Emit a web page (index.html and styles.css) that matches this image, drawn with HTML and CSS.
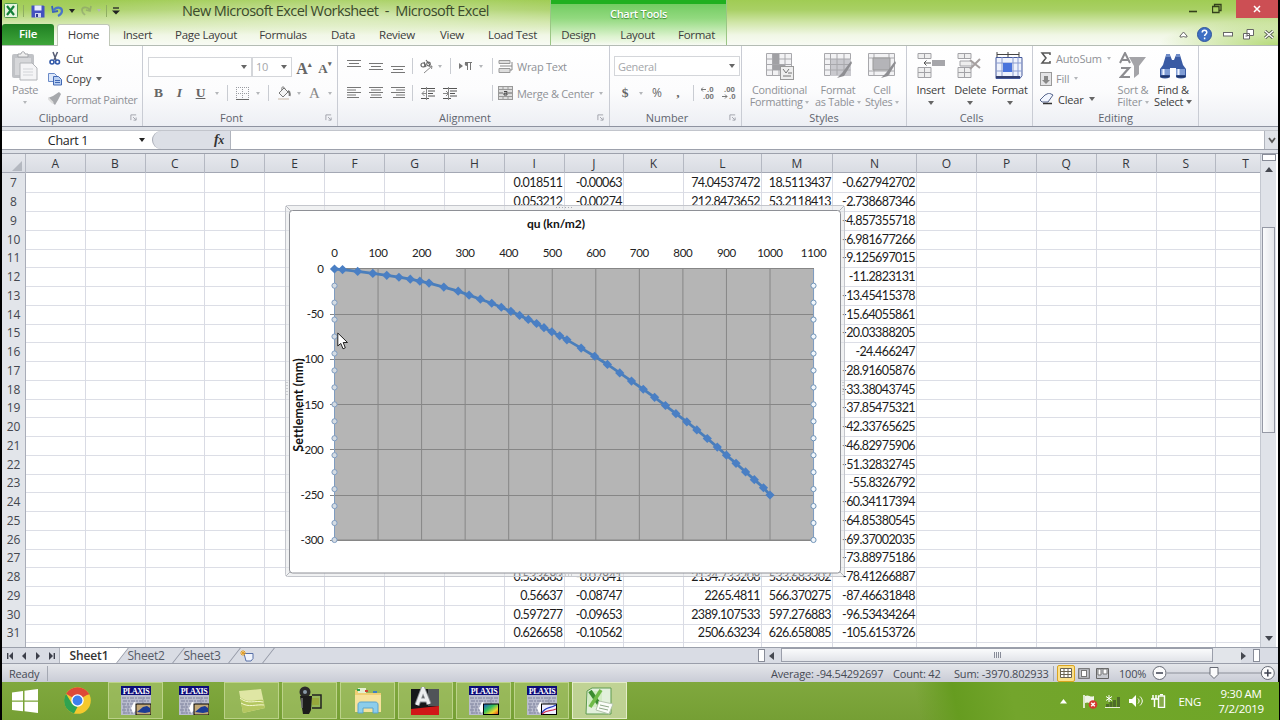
FILE: index.html
```
<!DOCTYPE html>
<html lang="en">
<head>
  <meta charset="UTF-8" />
  <meta name="viewport" content="width=device-width, initial-scale=1.0" />
  <title>New Microsoft Excel Worksheet - Microsoft Excel</title>
  <link rel="stylesheet" href="styles.css">
</head>
<body>
<svg width="0" height="0" class="defs">
  <symbol id="launcher" viewBox="0 0 8 8"><path d="M1 7V1h6M3.500 3.500l3 3M7 4v3H4" fill="none" stroke="#9a9da6"/></symbol>
  <symbol id="plaxis" viewBox="0 0 30 29">
    <rect width="30" height="29" fill="#b9bccd"/><rect width="30" height="9" fill="#0c0c78"/>
    <path d="M1 12h28M2 15h26M1 18h12M2 21h9M1 24h12M2 27h10" stroke="#7e829e" stroke-width="1.200" stroke-dasharray="4 1 2 1"/>
    <path d="M7 17v11M3 18v10M22 11v7" stroke="#8d91aa"/>
    <path d="M10 22l3-6 3 1 1 6-5 4z" fill="#fff"/>
  </symbol>
</svg>
<div class="window">
  <header class="top">
    <div class="titlebar">
      <div class="quick">
        <svg width="14" height="15" viewBox="0 0 14 15"><rect x=".5" y=".5" width="13" height="14" rx="1" fill="#e6f4e0" stroke="#4c9a4c"/><path d="M3 3l7 9M10 3l-7 9" stroke="#15803a" stroke-width="2.200"/></svg>
        <i class="vsep"></i>
        <svg width="14" height="14" viewBox="0 0 14 14"><path d="M.5 1.500h12l1 1v11H.5z" fill="#4350c0"/><path d="M3.500 1.500h7v5h-7z" fill="#e8ecff"/><path d="M4 9h6v4.500H4z" fill="#cdd3f0"/><path d="M5 10h2v3H5z" fill="#303a90"/></svg>
        <svg width="13" height="12" viewBox="0 0 13 12"><path d="M1 1l1 6 5-1" fill="none" stroke="#3a62b8" stroke-width="1.800"/><path d="M2 6c3-5 9-4 9 0 0 3-2 4-4 5" fill="none" stroke="#4a74c8" stroke-width="2.200"/></svg>
        <i class="caret dark"></i>
        <svg width="12" height="11" viewBox="0 0 12 11" opacity=".45"><path d="M11 1l-1 5-4-1M10 5c-3-4-8-3-8 0 0 3 2 4 3 5" fill="none" stroke="#7c8a6c" stroke-width="1.700"/></svg>
        <i class="caret faint"></i>
        <i class="vsep"></i>
        <svg width="8" height="8" viewBox="0 0 8 8"><path d="M1 1h6" stroke="#222" stroke-width="1.300"/><path d="M0 3.500h8l-4 4z" fill="#222"/></svg>
      </div>
      <h1 class="title">New Microsoft Excel Worksheet &nbsp;-&nbsp; Microsoft Excel</h1>
      <div class="winbtns">
        <svg width="10" height="18" viewBox="0 0 10 18"><path d="M1 11.500h8" stroke="#34401c" stroke-width="1.600"/></svg>
        <svg width="10" height="18" viewBox="0 0 10 18"><path d="M.5 6.500h6.500v6H.5zM2.500 6V4.500h6.500v6H7.500" fill="none" stroke="#34401c" stroke-width="1.300"/></svg>
        <span class="close"><svg width="8" height="8" viewBox="0 0 8 8"><path d="M1 1l6 6M7 1l-6 6" stroke="#fff" stroke-width="1.500"/></svg></span>
      </div>
    </div>
    <nav class="tabs">
      <a class="file">File</a><a class="on">Home</a><a class="ins">Insert</a><a class="pl">Page Layout</a><a class="fo">Formulas</a><a class="da">Data</a><a class="re">Review</a><a class="vi">View</a><a class="lo">Load Test</a>
      <a class="ctx first">Design</a><a class="ctx">Layout</a><a class="ctx">Format</a>
      <div class="helpers">
        <svg width="9" height="7" viewBox="0 0 9 7"><path d="M1 5l3.500-4L8 5v1H5.500L4.500 5l-1 1H1z" fill="#fff" stroke="#666"/></svg>
        <svg width="15" height="15" viewBox="0 0 15 15"><circle cx="7.500" cy="7.500" r="7" fill="#3f6fc4" stroke="#2f559c"/><path d="M5.200 5.600c0-3 4.600-3 4.600 0 0 1.600-2.200 1.500-2.200 3.400M7.600 10.500v1.700" fill="none" stroke="#fff" stroke-width="1.500"/></svg>
        <svg width="10" height="5" viewBox="0 0 10 5"><rect x=".5" y=".5" width="9" height="3.500" fill="#fff" stroke="#666"/></svg>
        <svg width="11" height="11" viewBox="0 0 11 11"><path d="M4 .5h6.500v6H4zM.5 4.500h6v5.500h-6z" fill="#fff" stroke="#666"/><path d="M2.500 7h2" stroke="#666"/></svg>
        <svg width="10" height="9" viewBox="0 0 10 9"><path d="M1 1l8 7M9 1L1 8" stroke="#5d6654" stroke-width="3.200"/><path d="M1 1l8 7M9 1L1 8" stroke="#fff" stroke-width="1.200"/></svg>
      </div>
    </nav>
    <div class="context">Chart Tools</div>
  </header>

  <section class="ribbon">
    <div class="group g-clip">
      <div class="tools">
        <div class="big off paste">
          <svg width="28" height="30" viewBox="0 0 28 30"><rect x="1" y="3" width="22" height="24" rx="2" fill="#c0c2c6"/><rect x="4" y="7" width="16" height="17" fill="#d6d7da"/><path d="M7 6V3h3c0-3 4-3 4 0h3v3z" fill="#eee" stroke="#a4a6aa"/><path d="M9 12h12l5 5v12H9z" fill="#f4f4f6" stroke="#b2b4b8"/><path d="M12 18h10M12 21h10M12 24h10" stroke="#d2d4d8"/></svg>
          <span>Paste</span><i class="caret faint"></i>
        </div>
        <div class="stack">
          <div><svg width="14" height="14" viewBox="0 0 14 14"><path d="M5 1l3 8M9.500 1L6 9" stroke="#555c74" stroke-width="1.500"/><circle cx="4" cy="11" r="2" fill="none" stroke="#3158a8" stroke-width="1.600"/><circle cx="9.500" cy="11" r="2" fill="none" stroke="#3158a8" stroke-width="1.600"/></svg>Cut</div>
          <div><svg width="14" height="14" viewBox="0 0 14 14"><path d="M.5 1.500h6l2 2v6h-8z" fill="#dde8fa" stroke="#6a8ac8"/><path d="M5.500 4.500h5l3 3v5.500h-8z" fill="#b9cff2" stroke="#4268b4"/><path d="M7 8.500h5M7 10.500h5" stroke="#4268b4"/></svg>Copy<i class="caret"></i></div>
          <div class="off"><svg width="14" height="14" viewBox="0 0 14 14"><path d="M0 6l5-2 6-4 2 2-3 6-3 5z" fill="#a6a8ac"/><path d="M0 6l5 5" stroke="#ddd" stroke-width="2"/></svg>Format Painter</div>
        </div>
      </div>
      <div class="caption">Clipboard<svg class="launch"><use href="#launcher"/></svg></div>
    </div>

    <div class="group g-font">
      <div class="tools">
        <div class="rowx font1">
          <div class="combo"><span></span><i class="caret"></i></div>
          <div class="combo size"><span>10</span><i class="caret"></i></div>
          <b class="glyph">A<sup>▴</sup></b><b class="glyph small">A<sup>▾</sup></b>
        </div>
        <div class="rowx font2">
          <b class="glyph">B</b><em class="glyph heavy">I</em><u class="glyph heavy">U</u><i class="caret faint"></i><i class="vsep"></i>
          <svg width="13" height="13" viewBox="0 0 13 13"><path d="M.5 0v12M6.500 0v12M12.500 0v12M0 .5h13M0 6.500h13" stroke="#9a9ca2" stroke-dasharray="1 1"/><path d="M0 12.500h13" stroke="#666"/></svg>
          <i class="caret faint"></i><i class="vsep"></i>
          <svg width="14" height="14" viewBox="0 0 14 14"><path d="M2 7l5-5 4 4-5 5zM5 4c-1-4 2-4 3-1" fill="#f4f4f4" stroke="#777"/><path d="M11 5c2 1 2 3 1.500 5" stroke="#777" stroke-width="2" fill="none"/><path d="M1 13h11" stroke="#e0d8d0" stroke-width="2"/></svg>
          <i class="caret faint"></i><b class="glyph gray">A</b><i class="caret faint"></i>
        </div>
      </div>
      <div class="caption">Font<svg class="launch"><use href="#launcher"/></svg></div>
    </div>

    <div class="group g-align">
      <div class="tools">
        <div class="rowx align1">
          <svg width="14" height="14" viewBox="0 0 14 14"><path d="M0 1.500h14M2 4.500h10M0 7.500h14" stroke="#777"/></svg>
          <svg width="14" height="14" viewBox="0 0 14 14"><path d="M0 4.500h14M2 7.500h10M0 10.500h14" stroke="#777"/></svg>
          <svg width="14" height="14" viewBox="0 0 14 14"><path d="M0 7.500h14M2 10.500h10M0 13.500h14" stroke="#777"/></svg>
          <i class="vsep"></i>
          <svg width="15" height="15" viewBox="0 0 15 15"><g fill="none" stroke="#666" stroke-width="1.200"><circle cx="4" cy="6" r="2"/><path d="M5 3l2 5M7 1l4 5"/><circle cx="9.500" cy="5" r="1.800"/></g><path d="M5 14l8-7M13 7l-3 .5M13 7l-.5 3" stroke="#888" fill="none"/></svg>
          <i class="caret faint"></i><i class="vsep"></i>
          <svg width="13" height="10" viewBox="0 0 13 10"><path d="M0 2l4 3-4 3z" fill="#777"/><path d="M8.500 9V1M11.500 9V1M6 1.500h7" stroke="#777"/><path d="M8 1c-3 0-3 4 0 4z" fill="#777"/></svg>
          <i class="caret faint"></i><i class="vsep"></i>
          <svg width="16" height="14" viewBox="0 0 16 14"><path d="M1 1.500h11v3H1zM1 9.500h11v4H1z" fill="#ddd" stroke="#999"/><path d="M2 7h12V3M14 7v4h-2" fill="none" stroke="#888"/></svg>
          <span class="lbl">Wrap Text</span>
        </div>
        <div class="rowx align2">
          <svg width="14" height="12" viewBox="0 0 14 12"><path d="M0 .5h14M0 3h9M0 5.500h14M0 8h9M0 10.500h12" stroke="#777"/></svg>
          <svg width="14" height="12" viewBox="0 0 14 12"><path d="M0 .5h14M2 3h10M0 5.500h14M2 8h10M1 10.500h12" stroke="#777"/></svg>
          <svg width="14" height="12" viewBox="0 0 14 12"><path d="M0 .5h14M5 3h9M0 5.500h14M5 8h9M2 10.500h12" stroke="#777"/></svg>
          <i class="vsep"></i>
          <svg width="14" height="13" viewBox="0 0 14 13"><path d="M0 1.500h14M7 4h7M7 6.500h5M7 9h7M0 11.500h8" stroke="#555"/><path d="M6 6.500H1M3.500 4L1 6.500 3.500 9M5.500 0v13" stroke="#888" fill="none"/></svg>
          <svg width="14" height="13" viewBox="0 0 14 13"><path d="M0 1.500h14M7 4h7M7 6.500h5M7 9h7M0 11.500h8" stroke="#555"/><path d="M0 6.500h5M3 4l2.500 2.500L3 9M5.500 0v13" stroke="#888" fill="none"/></svg>
          <span></span><i class="vsep"></i>
          <svg width="16" height="14" viewBox="0 0 16 14"><rect x=".5" y=".5" width="14" height="13" fill="#ddd" stroke="#999"/><path d="M1 3.500h13M1 10.500h13M5 0v3M10 0v3M5 11v3M10 11v3" stroke="#999"/><path d="M1 7h4M10 7h4" stroke="#666"/><path d="M6 5.500h3v3.500H6V7.200h3" fill="none" stroke="#444"/></svg>
          <span class="lbl">Merge &amp; Center</span><i class="caret faint"></i>
        </div>
      </div>
      <div class="caption">Alignment<svg class="launch"><use href="#launcher"/></svg></div>
    </div>

    <div class="group g-num">
      <div class="tools">
        <div class="rowx num1"><div class="combo"><span>General</span><i class="caret"></i></div></div>
        <div class="rowx num2">
          <b class="glyph">$</b><i class="caret faint"></i><span class="glyph sans">%</span><b class="glyph">,</b><i class="vsep"></i>
          <svg width="15" height="14" viewBox="0 0 15 14"><text x="6" y="6" class="dec">.0</text><text x="2" y="13" class="dec">.00</text><path d="M5 3.500H0M2 1.500l-2 2 2 2" stroke="#777" fill="none"/></svg>
          <svg width="15" height="14" viewBox="0 0 15 14"><text x="2" y="6" class="dec">.00</text><text x="7" y="13" class="dec">.0</text><path d="M0 10.500h5M3 8.500l2 2-2 2" stroke="#777" fill="none"/></svg>
        </div>
      </div>
      <div class="caption">Number<svg class="launch"><use href="#launcher"/></svg></div>
    </div>

    <div class="group g-styles">
      <div class="tools">
        <div class="big off"><svg width="28" height="28" viewBox="0 0 28 28"><path d="M.5 1.500h25v22H.5zM.5 7h25M.5 12.500h25M.5 18h25M6.500 1v22M13 1v22M19 1v22" fill="#f2f2f4" stroke="#a8a8ac"/><path d="M7 2h6v10H7zM7 13h12v5H7z" fill="#a0a0a4"/><rect x="14.500" y="14.500" width="13" height="13" fill="#eee" stroke="#999"/><path d="M17 17l3 4 3-4M17 24h8M22 21h4" stroke="#777" fill="none"/></svg><span>Conditional<br>Formatting <i class="caret faint"></i></span></div>
        <div class="big off"><svg width="28" height="28" viewBox="0 0 28 28"><path d="M.5 1.500h26v22H.5z" fill="#f2f2f4" stroke="#a8a8ac"/><path d="M6 7h21v17H6z" fill="#c9c9ce"/><path d="M.5 7h26M.5 12.500h26M.5 18h26M6.500 1v22M13 1v22M20 1v22" stroke="#a8a8ac"/><path d="M27 9l-9 12-5 5 7-2 8-13z" fill="#8e8e92"/></svg><span>Format<br>as Table <i class="caret faint"></i></span></div>
        <div class="big off"><svg width="28" height="28" viewBox="0 0 28 28"><path d="M.5 1.500h26v22H.5zM.5 6h26M.5 19h26M6 1v22M21 1v22" fill="#f2f2f4" stroke="#a8a8ac"/><path d="M5 6h17v12H5z" fill="#b4b4b8" stroke="#999"/><path d="M27 9l-9 12-5 5 7-2 8-13z" fill="#8e8e92"/></svg><span>Cell<br>Styles <i class="caret faint"></i></span></div>
      </div>
      <div class="caption">Styles</div>
    </div>

    <div class="group g-cells">
      <div class="tools">
        <div class="big"><svg width="28" height="28" viewBox="0 0 28 28"><path d="M1 1.500h13v5H1zM1 15.500h13v10H1zM1 20.500h13M7.500 1v5M7.500 15v10" fill="#eee" stroke="#a2a2a6"/><rect x="15" y="8" width="13" height="6" fill="#a6a6aa"/><path d="M14 11H7M9.500 8.500L7 11l2.500 2.500" stroke="#555" fill="none"/></svg><span>Insert</span><i class="caret"></i></div>
        <div class="big"><svg width="28" height="28" viewBox="0 0 28 28"><path d="M2 1.500h13v5H2zM2 15.500h13v10H2zM2 20.500h13M8.500 1v5M8.500 15v10M4 9h12v5H4z" fill="#eee" stroke="#a2a2a6"/><path d="M14 8l10 8M24 7L14 17" stroke="#a6a0a0" stroke-width="2"/></svg><span>Delete</span><i class="caret"></i></div>
        <div class="big"><svg width="29" height="28" viewBox="0 0 29 28"><path d="M2 2.500h22M2 0v5M13 0v5M24 0v5" stroke="#444"/><path d="M1 5.500h26v18l-2 3H1z" fill="#eef2fc" stroke="#44599c"/><path d="M1 11h26M1 19h26M7 5v21M18 5v21M23 5v21" stroke="#8a9cd0"/><rect x="8" y="11" width="9" height="9" fill="#4a74dc"/><path d="M1 25h24" stroke="#333f70" stroke-width="2"/></svg><span>Format</span><i class="caret"></i></div>
      </div>
      <div class="caption">Cells</div>
    </div>

    <div class="group g-edit">
      <div class="tools">
        <div class="stack">
          <div class="off"><svg width="12" height="12" viewBox="0 0 12 12"><path d="M10 3V1H2l4 5-4 5h8V9" fill="none" stroke="#555" stroke-width="1.500"/></svg>AutoSum<i class="caret faint"></i></div>
          <div class="off"><svg width="12" height="14" viewBox="0 0 12 14"><rect x=".5" y=".5" width="11" height="13" fill="#e4e4e6" stroke="#999"/><path d="M4 4h4v4h2l-4 4-4-4h2z" fill="#888"/></svg>Fill<i class="caret faint"></i></div>
          <div><svg width="14" height="12" viewBox="0 0 14 12"><path d="M5 2l4-2 4 2-5 7H2L0 7z" fill="#f2f6ff" stroke="#56658c"/><path d="M3 10.500h9" stroke="#333" stroke-width="1.500"/></svg>Clear<i class="caret"></i></div>
        </div>
        <div class="big off"><svg width="28" height="28" viewBox="0 0 28 28"><path d="M1 11L6 1l5 10M3 8h6" fill="none" stroke="#8c8c90" stroke-width="2"/><path d="M2 16h8L2 25h9" fill="none" stroke="#8c8c90" stroke-width="2.200"/><path d="M10 5h17l-7 9v8l-5 4V14z" fill="#a4a4a8"/></svg><span>Sort &amp;<br>Filter <i class="caret faint"></i></span></div>
        <div class="big find"><svg width="28" height="28" viewBox="0 0 28 28"><path d="M7 3h4l2 5h2l2-5h4l3 10 3 4v8q-5 3-10 0v-9h-6v9q-5 3-10 0v-8l3-4z" fill="#3a5ba4"/><path d="M7 2h4v3H7zM17 2h4v3h-4z" fill="#6f8cc8"/><path d="M2 17h9v6H2zM17 17h9v6h-9z" fill="#7f9cd4"/><path d="M4.500 17v6M19.500 17v6" stroke="#eef3ff" stroke-width="2"/><path d="M1.500 24.500h9M17.500 24.500h9" stroke="#1e3468" stroke-width="2"/></svg><span>Find &amp;<br>Select <i class="caret"></i></span></div>
      </div>
      <div class="caption">Editing</div>
    </div>
  </section>

  <section class="formula">
    <div class="namebox"><span>Chart 1</span><i class="caret dark"></i></div>
    <div class="fx"><i>f<small>x</small></i></div>
    <div class="expr"></div>
    <div class="expand"><svg width="8" height="7" viewBox="0 0 8 7"><path d="M1 1l3 4 3-4" fill="none" stroke="#555" stroke-width="1.800"/></svg></div>
  </section>

  <main class="sheet">
    <div class="cells" id="cells"></div>
    <div class="vscroll">
      <i class="split"></i><i class="up"></i><i class="thumb"></i><i class="down"></i>
    </div>
    <svg class="chart" id="chart" width="562" height="374" viewBox="284 204 562 374"></svg>
    <svg class="cursor" width="12" height="18" viewBox="0 0 12 18"><path d="M.8 1v13l3-2.600 2.200 5.400 2.300-1L6.200 10.500h4.300z" fill="#fff" stroke="#222"/></svg>
  </main>

  <footer class="sheetbar">
    <div class="arrows">
      <svg width="7" height="8" viewBox="0 0 7 8"><path d="M.7 1v6" stroke="#3c3f4a" stroke-width="1.400"/><path d="M6 0v8L2 4z" fill="#3c3f4a"/></svg>
      <svg width="7" height="8" viewBox="0 0 7 8"><path d="M5 0v8L1 4z" fill="#3c3f4a"/></svg>
      <svg width="7" height="8" viewBox="0 0 7 8"><path d="M2 0v8l4-4z" fill="#3c3f4a"/></svg>
      <svg width="7" height="8" viewBox="0 0 7 8"><path d="M1 0v8l4-4z" fill="#3c3f4a"/><path d="M6.300 1v6" stroke="#3c3f4a" stroke-width="1.400"/></svg>
    </div>
    <a class="stab on"><span>Sheet1</span></a><a class="stab">Sheet2</a><a class="stab">Sheet3</a>
    <a class="stab new"><svg width="15" height="12" viewBox="0 0 15 12"><path d="M4 3.500h9v5l-2 2.500H6z" fill="#f0f4fc" stroke="#5870a8"/><path d="M3 0v6M0 3h6M1 1l4 4M5 1L1 5" stroke="#e8a020"/></svg></a>
    <div class="hscroll"><i class="split"></i><i class="left"></i><div class="track"><div class="thumb"><i></i></div></div><i class="right"></i><i class="split"></i></div>
  </footer>

  <footer class="status">
    <span class="ready">Ready</span>
    <span class="avg">Average: -94.54292697</span><span class="cnt">Count: 42</span><span class="sum">Sum: -3970.802933</span>
    <div class="views">
      <span class="on"><svg width="12" height="10" viewBox="0 0 12 10"><path d="M.5.5h11v9H.5zM.5 3.500h11M.5 6.500h11M4 .5v9M8 .5v9" fill="#fff" stroke="#6a6250"/></svg></span>
      <span><svg width="12" height="11" viewBox="0 0 12 11"><rect x=".7" y=".7" width="10.600" height="9.600" fill="#c4c6cc" stroke="#666"/><rect x="3.500" y="2.500" width="5" height="6" fill="#fff" stroke="#777"/></svg></span>
      <span><svg width="13" height="11" viewBox="0 0 13 11"><path d="M.5.5h12v10H.5z" fill="#c8cad0" stroke="#666"/><path d="M2 1h3v6H2zM7 1h4v5H7z" fill="#fff" stroke="#777"/></svg></span>
    </div>
    <span class="pct">100%</span>
    <svg class="zoom" width="124" height="16" viewBox="0 0 124 16"><path d="M15 8h94" stroke="#8a8e98"/><g fill="#fbfbfc" stroke="#666a74"><circle cx="7.500" cy="8" r="6.500"/><circle cx="115.800" cy="8" r="6.500"/><path d="M58 2.500h8v7L62 13.500 58 9.500z"/></g><path d="M4 8h7M112.300 8h7M115.800 4.500v7" stroke="#3e4250" stroke-width="1.500"/></svg>
  </footer>
</div>

<footer class="taskbar">
  <div class="tb"><svg width="26" height="24" viewBox="0 0 26 24"><path d="M0 3.500l11-1.500v9.500H0zM12.500 1.800L26 0v11.500H12.500zM0 12.800h11v9.500L0 21zM12.500 12.800H26V24l-13.500-1.800z" fill="#fff"/></svg></div>
  <div class="tb chrome"><svg width="27" height="27" viewBox="0 0 27 27"><circle cx="13.500" cy="13.500" r="13.300" fill="#f5c92e"/><path d="M13.500 13.500L2 6.800A13.300 13.300 0 0 1 25 6.800z" fill="#de4a38"/><path d="M2 6.800l6 10 5.500 3.200-3.500 6.500A13.300 13.300 0 0 1 2 6.800z" fill="#2fa350"/><path d="M13.500 7.500H25.300L25 6.800 13.500 2z" fill="#de4a38"/><circle cx="13.500" cy="13.500" r="6.200" fill="#fff"/><circle cx="13.500" cy="13.500" r="4.900" fill="#3e80ec"/></svg></div>
  <div class="tb lit"><svg width="30" height="29" viewBox="0 0 30 29"><use href="#plaxis"/><text x="15" y="8" text-anchor="middle" class="plx">PLAXIS</text><rect x="15" y="18" width="15" height="11" fill="#c2a878" stroke="#000"/><path d="M16 26l6-5 4-1 3 2v4l-5 1z" fill="#1c3c94"/></svg></div>
  <div class="tb"><svg width="30" height="29" viewBox="0 0 30 29"><use href="#plaxis"/><text x="15" y="8" text-anchor="middle" class="plx">PLAXIS</text><rect x="15" y="18" width="15" height="11" fill="#c2a878" stroke="#000"/><path d="M16 26l6-5 4-1 3 2v4l-5 1z" fill="#1c3c94"/></svg></div>
  <div class="tb lit"><svg width="28" height="26" viewBox="0 0 28 26"><path d="M1 3l22-2 4 19-22 5z" fill="#dfe6a4"/><path d="M2 9c8 7 15 2 23 3l2 8-22 5z" fill="#b4c760"/><path d="M2 10c8 7 15 2 23 4M3 15c8 5 15 1 23 2" stroke="#f4f8d0" fill="none"/></svg></div>
  <div class="tb lit"><svg width="26" height="30" viewBox="0 0 26 30"><circle cx="8" cy="6" r="5.500" fill="#2a2a2a"/><circle cx="8" cy="6" r="2" fill="#8a9aa8"/><path d="M3 10h12l-1 14-2 4H6l-1-6z" fill="#1c1c1c"/><path d="M5 12v10" stroke="#777" stroke-width="1.500"/><path d="M15 9h9v13h-9" fill="none" stroke="#222" stroke-width="1.500"/><path d="M15 12h7v7h-7z" fill="#97a83c"/></svg></div>
  <div class="tb lit"><svg width="30" height="27" viewBox="0 0 30 27"><path d="M2 3h9l2 3h15v19H2z" fill="#efcf74"/><path d="M5 1h8v5H5z" fill="#e6f0d0"/><path d="M4 2h3v2H4z" fill="#2ba04c"/><path d="M12 3h3v2h-3z" fill="#d04030"/><path d="M20 4h4v2h-4z" fill="#3e80c4"/><path d="M2 8h26v17H2z" fill="#f7e29b"/><path d="M5 26V18c0-2 1-3 3-3h14c2 0 3 1 3 3v8h-5v-5H10v5z" fill="#8ccdeb" stroke="#5ba4cc"/></svg></div>
  <div class="tb lit"><svg width="29" height="28" viewBox="0 0 29 28"><rect y="2" width="28" height="26" fill="#16181a"/><path d="M17 2h11v17H17z" fill="#505458"/><path d="M0 22l28-3v9H0z" fill="#d01818"/><path d="M6 18L12 2l6 15M8 13h8" fill="none" stroke="#8c9094" stroke-width="5"/><path d="M6 18L12 2l6 15M8 13h8" fill="none" stroke="#eceeef" stroke-width="3.200"/></svg></div>
  <div class="tb lit"><svg width="30" height="29" viewBox="0 0 30 29"><defs><linearGradient id="heat" x2="1" y2="1"><stop stop-color="#1c50d0"/><stop offset=".4" stop-color="#34c05c"/><stop offset=".7" stop-color="#f0d830"/><stop offset="1" stop-color="#e03018"/></linearGradient></defs><use href="#plaxis"/><text x="15" y="8" text-anchor="middle" class="plx">PLAXIS</text><rect x="14.500" y="18" width="15" height="10.500" fill="url(#heat)" stroke="#000"/></svg></div>
  <div class="tb lit"><svg width="30" height="29" viewBox="0 0 30 29"><use href="#plaxis"/><text x="15" y="8" text-anchor="middle" class="plx">PLAXIS</text><rect x="14.500" y="18" width="15" height="10.500" fill="#eef" stroke="#000"/><path d="M15 27c3-6 7-4 14-8" stroke="#2038c0" fill="none" stroke-width="1.300"/><path d="M15 28c5-5 8-2 14-5" stroke="#d03050" fill="none" stroke-width="1.300"/></svg></div>
  <div class="tb lit active"><svg width="29" height="28" viewBox="0 0 29 28"><path d="M2 4L7 1h19v26H1z" fill="#e2f0dc" stroke="#5e9a50"/><path d="M3 4h14v16H3z" fill="#d2ecc4"/><path d="M5 4l11 16" stroke="#3b8c30" stroke-width="4"/><path d="M16 3L5 20" stroke="#6fba48" stroke-width="3.500"/><path d="M14 14l14 3-4 10-13-4z" fill="#fafcf8" stroke="#b4c4ac"/><path d="M15 18l9 2M14 21l9 2" stroke="#8fa888"/></svg></div>
  <div class="tray">
    <svg width="7" height="5" viewBox="0 0 7 5"><path d="M0 4.500L3.500 0 7 4.500z" fill="#fff"/></svg>
    <svg width="15" height="15" viewBox="0 0 15 15"><path d="M1 1v13" stroke="#fff" stroke-width="1.500"/><path d="M2 2c4-2 5 2 9 0v7c-4 2-5-2-9 0z" fill="#f0f4e8"/><circle cx="10" cy="10.500" r="4.300" fill="#d43a30"/><path d="M8.200 8.700l3.600 3.600M11.800 8.700l-3.600 3.600" stroke="#fff" stroke-width="1.400"/></svg>
    <svg width="16" height="13" viewBox="0 0 16 13"><path d="M2.500 13V9M6 13V7M9.500 13V5M13.500 13V2" stroke="#4e6c28" stroke-width="3"/><path d="M4 0v7M1 1.500l6 4M7 1.500l-6 4" stroke="#fff"/><path d="M0 12.500h15" stroke="#e8f0d8"/></svg>
    <svg width="15" height="12" viewBox="0 0 15 12"><path d="M0 4h3l4-4v12L3 8H0z" fill="#fff"/><path d="M9 3.500c1.500 1.500 1.500 3.500 0 5M11 1.500c3 3 3 6 0 9" stroke="#fff" fill="none"/></svg>
    <svg width="15" height="14" viewBox="0 0 15 14"><rect x="7.500" y="2" width="6" height="11.500" fill="#86aa4a" stroke="#fff" stroke-width="1.400"/><path d="M9 .7h3M2 1v4M5 1v4M0 5h7M3.500 5v8" stroke="#fff" stroke-width="1.500"/></svg>
    <span class="lang">ENG</span>
    <div class="clock">9:30 AM<br>7/2/2019</div>
  </div>
</footer>
<script src="script.js"></script>
</body>
</html>
```

FILE: styles.css
```
*{box-sizing:border-box;margin:0;padding:0}
body{width:1280px;height:720px;overflow:hidden;background:#000;color:#3c3c3c;
  font:11.5px "Open Sans","Noto Sans",sans-serif;letter-spacing:-.3px}
svg{display:block;flex:none}
.defs{position:absolute}
.window{margin:0 2px;width:1276px;height:682px;display:flex;flex-direction:column;position:relative;background:#dfe2e8}

.caret{display:inline-block;flex:none;width:0;height:0;border:3px solid transparent;border-top:4px solid #666;border-bottom:0}
.caret.dark{border-top-color:#222}
.caret.faint{border-top-color:#b4b6ba;border-left-width:2.5px;border-right-width:2.5px;border-top-width:3px}
.vsep{width:1px;height:16px;background:#c9ccd2}

/* title and tabs */
.top{height:45px;position:relative;
  background:radial-gradient(ellipse 290px 24px at 335px 16px,rgba(255,255,255,.4),transparent),
  radial-gradient(ellipse 120px 26px at 1276px 45px,rgba(165,210,90,.8),transparent),
  linear-gradient(#a0cc54,#a9d065 22%,#d0e6a8 50%,#f1f7e6 78%,#f8fbf4)}
.titlebar{height:24px;display:flex}
.quick{width:180px;height:21px;padding-left:2px;display:flex;align-items:center}
.quick>*{margin-right:5px}
.quick .vsep{background:#8fae62;height:12px}
.quick svg:nth-of-type(2){margin:0 6px 0 2px}
.title{font-weight:400;font-size:14.500px;letter-spacing:-.57px;line-height:22px;color:#3b4a2c;white-space:nowrap}
.winbtns{margin-left:auto;display:flex;gap:14px;height:18px}
.winbtns .close{width:42px;height:18px;background:#cc4f54;display:grid;place-items:center}
.tabs{height:21px;display:flex;position:relative;z-index:1}
.tabs a{height:21px;line-height:21px;text-align:center;white-space:nowrap}
.tabs .file{width:52px;height:21px;line-height:20px;background:linear-gradient(#1f7f22,#3ea53a);color:#fff;font-weight:600;border-radius:3px 3px 0 0}
.tabs .on{width:53px;margin:0 0 0 3px;height:22px;line-height:19px;background:#fff;border:1px solid #c0c8b8;border-bottom:0;border-radius:3px 3px 0 0}
.tabs .ins{width:55px}.tabs .pl{width:82px}.tabs .fo{width:72px}.tabs .da{width:48px}.tabs .re{width:60px}
.tabs .vi{width:50px}.tabs .lo{width:71px}
.tabs a.ctx{width:59px}
.tabs a.first{margin-left:1px}
.helpers{margin-left:auto;display:flex;align-items:center;gap:10px;padding-right:4px;padding-bottom:1px}
.helpers svg:nth-child(2){margin:0 1px 0 -1px}
/* contextual band lies over the title gradient */
.context{position:absolute;left:549px;top:0;width:175px;height:45px;text-align:center;line-height:20px;
  color:#fff;font-weight:600;font-size:11px;text-shadow:0 1px 1px #3a8a30;border-top:4px solid #20b020;
  background:linear-gradient(#73cc62,#92d97f 35%,rgba(220,243,206,.9) 80%,rgba(250,253,248,0));
  box-shadow:-1px 0 #9bc685,1px 0 #9bc685}

/* ribbon */
.ribbon{height:82px;display:flex;font-size:11px;border-top:1px solid #b4bcb4;border-bottom:1px solid #8e93a0;background:linear-gradient(#fff,#fcfcfd 55%,#edeff4)}
.group{display:flex;flex-direction:column;border-right:1px solid #c9ccd4;height:80px}
.g-clip{width:141px}.g-font{width:195px}.g-align{width:272px}.g-num{width:132px}
.g-styles{width:165px}.g-cells{width:126px}.g-edit{width:166px}
.tools{height:64px;display:block}
.g-clip .tools,.g-styles .tools,.g-cells .tools,.g-edit .tools{display:flex}
.caption{height:16px;line-height:15px;position:relative;text-align:center;color:#60646e;letter-spacing:-.05px;font-size:11px}
.g-clip .caption,.g-font .caption,.g-align .caption,.g-num .caption{padding-right:17px}
.launch{position:absolute;right:5px;top:4px;width:7px;height:7px}
.big{display:flex;flex-direction:column;align-items:center;padding-top:6px;line-height:12px;text-align:center;white-space:nowrap;letter-spacing:-.2px}
.big span{margin-top:4px}
.big>.caret{margin-top:5px}
.big span .caret{vertical-align:2px}
.off{color:#8f9196}
.paste{width:46px}
.paste svg{margin-top:-1px}
.paste span{margin-top:3px}
.stack{display:flex;flex-direction:column;padding-top:2px;letter-spacing:-.2px}
.stack div{display:flex;align-items:center;height:20.600px;white-space:nowrap}
.stack svg{margin-right:4px}
.stack .caret{margin-left:5px}
.g-clip .off{letter-spacing:-.38px}
.g-styles .big{font-size:10.800px;letter-spacing:-.25px}
.g-styles .big:nth-child(1){width:75px}
.g-styles .big:nth-child(2){width:42px}
.g-styles .big:nth-child(3){width:46px}
.g-cells{padding-left:4px}
.g-cells .big{width:39.500px}
.g-edit .stack{width:80px;padding-left:7px}
.g-edit .big{width:40px}
.rowx{display:grid;align-items:center;justify-items:center}
.font1,.num1,.align1{height:20px;margin-top:10px}
.font2,.num2,.align2{height:20px;margin-top:7px}
.font1,.font2{margin-left:5px}
.font1{grid-template-columns:104px 40px 24px 18px}
.font2{grid-template-columns:21px 21px 21px 11px 10px 20px 11px 11px 20px 10px 21px 10px}
.align1,.align2{margin-left:5px}
.align1{grid-template-columns:22px 22px 22px 6px 22px 6px 14px 16px 16px 6px 22px auto;justify-content:start}
.align2{grid-template-columns:22px 22px 22px 6px 26px 18px 30px 6px 22px auto 14px;justify-content:start}
.num1,.num2{margin-left:4px}
.num1{grid-template-columns:126px}
.num2{grid-template-columns:22px 9px 24px 18px 12px 18px 24px}
.lbl{color:#8f9196;letter-spacing:-.28px;font-size:11px;white-space:nowrap}
.combo{width:100%;height:20px;border:1px solid #d4d6da;display:flex;align-items:center;justify-content:space-between;padding:0 4px 0 3px;background:#fff;color:#a4a6aa}
.glyph{font-family:"Liberation Serif",serif;font-size:13.500px;color:#666;line-height:16px;letter-spacing:0}
.heavy{font-weight:700}
.font1 .glyph{font-size:16px}.font1 .small{font-size:13px}
.glyph sup{font-size:7px;vertical-align:7px}
.glyph.gray{color:#888;font-size:15px;font-weight:400}
.sans{font-family:"Open Sans",sans-serif;font-size:12px}
.dec{font:bold 7.500px "Open Sans",sans-serif;fill:#777;letter-spacing:0}

/* formula bar */
.formula{height:20px;margin-top:3px;display:flex;background:#fff;border-top:1px solid #c2c5cc;border-bottom:1px solid #9da1ac}
.namebox{width:150px;display:flex;align-items:center;padding-right:7px;font-size:12.500px;color:#222}
.namebox span{flex:1;text-align:center;padding-right:5px}
.fx{width:79px;background:#dcdfe6;border-right:1px solid #b0b4bd;border-left:1px solid #a8acb6;border-radius:10px 0 0 10px;text-align:right;padding-right:6px;line-height:18px}
.fx i{font:italic bold 14px/18px "Liberation Serif",serif;color:#333}
.fx small{font-size:12px}
.expr{flex:1}
.expand{width:14px;background:#dfe2e8;border-left:1px solid #b0b4bd;display:grid;place-items:center}

/* grid */
.sheet{height:494px;margin-top:3px;display:flex;position:relative;background:#fff;border-top:1px solid #9da1ac}
.cells{width:1258px;height:493px;overflow:hidden}
.line{display:grid;height:18.750px;line-height:18px}
.line.head{height:19.250px;background:linear-gradient(#e6e8ed,#d9dce3);border-bottom:1px solid #a4a8b4}
.line.head b{font-weight:400;font-size:12px;line-height:20px;text-align:center;border-right:1px solid #b4b8c2;letter-spacing:0;color:#33363c}
.line b.rh{font-weight:400;font-size:12px;line-height:19px;text-align:center;background:#e2e5ea;border-right:1px solid #a9adb8;border-bottom:1px solid #c0c4cc;color:#44474e;letter-spacing:0}
.line .corner{position:relative}
.line .corner::after{content:"";position:absolute;right:3px;bottom:3px;border:5px solid #b4b8c0;border-top-color:transparent;border-left-color:transparent}
.line span{border-right:1px solid #d9dbe4;border-bottom:1px solid #dcdee6;text-align:right;padding-right:1px;color:#1c1c1c;
  font:12.500px/19px Lato,"Open Sans",sans-serif;letter-spacing:-.6px;white-space:nowrap;display:flex;justify-content:flex-end}
.vscroll{width:16px;display:flex;flex-direction:column;align-items:center;background:#e0e3e9;border-left:1px solid #c4c8d0}
.vscroll .split{width:14px;height:7px;border:1px solid #888c98;background:#fff}
.vscroll .up{border:4px solid transparent;border-top:0;border-bottom:5px solid #44474f;margin-top:6px}
.vscroll .thumb{width:13px;height:206px;margin-top:55px;border:1px solid #9599a5;background:linear-gradient(90deg,#fafbfc,#e4e6ea)}
.vscroll .down{border:4px solid transparent;border-bottom:0;border-top:5px solid #44474f;margin-top:auto;margin-bottom:6px}
.chart{position:absolute;left:282px;top:50px}
.chart text{font-family:Lato,"Open Sans",sans-serif;font-size:11.500px;fill:#222;letter-spacing:-.3px}
.chart .bold{font-weight:700;font-size:12px;fill:#111;letter-spacing:-.05px}
.chart .side{font-size:12.500px;letter-spacing:.1px}
.cursor{position:absolute;left:335px;top:178px}

/* sheet tabs and horizontal scroll */
.sheetbar{height:16px;display:flex;border-top:1px solid #9ba0ab;background:#d9dce4;overflow:hidden}
.arrows{width:58px;display:flex;align-items:center;gap:6.500px;padding-left:5px;border-right:1px solid #b0b4be}
.stab{position:relative;width:56px;display:grid;place-items:center;font-size:12px;line-height:14px;letter-spacing:-.25px;color:#555a66}
.stab::after{content:"";position:absolute;right:-5px;top:0;height:15px;width:10px;border-right:1px solid #8f94a2;transform:skewX(-38deg)}
.stab.on{width:58px;background:#fff;font-weight:600;color:#333;letter-spacing:-.15px}
.stab.on span{position:relative;z-index:1}
.stab.on::before{content:"";position:absolute;right:-5px;top:0;height:15px;width:10px;background:#fff;transform:skewX(-38deg)}
.stab.new{width:34px}
.hscroll{margin-left:auto;width:520px;padding-right:18px;display:flex;align-items:center}
.hscroll .split{width:7px;height:13px;border:1px solid #888c98;background:#fff}
.hscroll .left{border:4px solid transparent;border-left:0;border-right:5px solid #44474f;margin:0 7px 0 4px}
.hscroll .right{border:4px solid transparent;border-right:0;border-left:5px solid #44474f;margin:0 7px 0 0}
.track{width:460px;height:15px;background:#e2e5ea;padding-right:28px}
.thumb{background:linear-gradient(#fafbfc,#e2e4e9);border:1px solid #9a9eaa}
.track .thumb{height:14px;display:grid;place-items:center}
.track .thumb i{width:7px;height:6px;background:repeating-linear-gradient(90deg,#888c98 0 1px,transparent 1px 2px)}

/* status bar */
.status{height:19px;display:flex;align-items:center;border-top:1px solid #9a9eaa;background:linear-gradient(#e4e6ea,#c9ccd6);color:#464a54;letter-spacing:-.2px;font-size:11px;white-space:nowrap}
.ready{width:46px;padding-left:7px;border-right:1px solid #a4a8b2}
.avg{margin-left:723px;width:122px}
.cnt{width:61px}
.sum{width:100px;border-right:1px solid #a4a8b2}
.views{display:flex;margin-left:3px}
.views span{width:18px;height:17px;display:grid;place-items:center}
.views .on{background:#fbe08a;border:1.500px solid #d9a420;border-radius:2px}
.pct{margin-left:8px;width:33px}

/* taskbar */
.taskbar{height:38px;margin:0 1px 0 2px;display:flex;overflow:hidden;
  background:linear-gradient(78deg,transparent 71.500%,#669c20 74.500%,#73a52c 79%,#6ea626 100%),linear-gradient(#80a83e,#759f34)}
.tb{width:55px;height:37px;margin:0 3px 0 0;display:grid;place-items:center}
.tb:first-child{width:46px;margin:0}
.chrome{width:58px;margin:0 2px 0 0}
.tb.lit{background:rgba(205,222,150,.34);border:1px solid rgba(225,238,185,.5)}
.tb.active{background:rgba(222,232,190,.68);border-color:#e4edc8}
.plx{font:bold 8px "Liberation Serif",serif;fill:#fff;letter-spacing:-.5px}
.tray{margin-left:auto;display:flex;align-items:center;gap:7.500px;color:#fff;font-size:11.500px}
.tray svg:first-child{margin-right:8px}
.lang{margin-left:5px;width:22px}
.clock{width:62px;margin-left:2px;text-align:center;line-height:15.500px;margin-right:7px}
```

FILE: script.js
```
const widths = [59.5,60,59.5,60,60,60,60,60,59.5,59.5,60,78,71,84,60,60,59.5,60,59.5,60];
const cols = "24px " + widths.map(w => w + "px").join(" ");
const rows = {
  7: {I:"0.018511",J:"-0.00063",L:"74.04537472",M:"18.5113437"},
  8: {I:"0.053212",J:"-0.00274",L:"212.8473652",M:"53.2118413"},
  28: {I:"0.533683",J:"-0.07841",L:"2134.733208",M:"533.683302"},
  29: {I:"0.56637",J:"-0.08747",L:"2265.4811",M:"566.370275"},
  30: {I:"0.597277",J:"-0.09653",L:"2389.107533",M:"597.276883"},
  31: {I:"0.626658",J:"-0.10562",L:"2506.63234",M:"626.658085"}
};
const colN = ["-0.627942702","-2.738687346","-4.857355718","-6.981677266","-9.125697015","-11.2823131",
  "-13.45415378","-15.64055861","-20.03388205","-24.466247","-28.91605876","-33.38043745","-37.85475321",
  "-42.33765625","-46.82975906","-51.32832745","-55.8326792","-60.34117394","-64.85380545","-69.37002035",
  "-73.88975186","-78.41266887","-87.46631848","-96.53434264","-105.6153726"];

const letters = widths.map((w, i) => String.fromCharCode(65 + i));
let html = `<div class="line head" style="grid-template-columns:${cols}"><b class="corner"></b>${letters.map(l => `<b>${l}</b>`).join("")}</div>`;
for (let r = 7; r <= 32; r++) {
  const data = rows[r] || {};
  if (colN[r - 7]) data.N = colN[r - 7];
  html += `<div class="line" style="grid-template-columns:${cols}"><b class="rh">${r < 32 ? r : ""}</b>` +
    letters.map(l => `<span>${data[l] || ""}</span>`).join("") + "</div>";
}
document.getElementById("cells").innerHTML = html;

// load (kn/m2), settlement (mm)
const series = [[0,0],[18.5,-.6],[53.2,-2.7],[88,-4.9],[120,-7],[148,-9.1],[174,-11.3],[196,-13.5],[217,-15.6],
  [251,-20],[284,-24.5],[309,-28.9],[335,-33.4],[361,-37.9],[383,-42.3],[405,-46.8],[425,-51.3],[445,-55.8],
  [464,-60.3],[481,-64.9],[499,-69.4],[517,-73.9],[533.7,-78.4],[566.4,-87.5],[597.3,-96.5],[626.7,-105.6],
  [655,-115],[682,-124],[709,-133],[735,-142],[760,-151],[784,-160],[809,-169],[832,-178],[856,-187.5],
  [879,-197],[900,-206],[922,-215],[944,-224.5],[964,-233],[985,-242],[1000,-250]];
const X = v => 334.5 + v * .4355;
const Y = v => 269 - v * .904;

let s = `<rect x="285.5" y="205.5" width="559" height="371" rx="2" fill="#e2e3e6" fill-opacity=".5" stroke="#c4c6cc"/>
<rect x="289.500" y="210.500" width="551" height="362.500" rx="3" fill="#fff" stroke="#8e9096"/>
<rect x="334.500" y="268.500" width="479" height="271.500" fill="#b5b5b5" stroke="#868686"/>`;
for (let v = 0; v <= 1100; v += 100) {
  if (v) s += `<path d="M${X(v)} 269V540" stroke="#868686"/>`;
  s += `<text x="${X(v)}" y="257" text-anchor="middle">${v}</text>`;
}
for (let v = 0; v >= -300; v -= 50) {
  if (v) s += `<path d="M330 ${Math.floor(Y(v)) + .5}H813" stroke="#868686"/>`;
  s += `<text x="323.500" y="${Y(v) + 4}" text-anchor="end">${v}</text>`;
}
s += `<path d="M334.500 269V540M813.500 269V540" stroke="#7f9cc0"/>`;
for (let i = 0; i < 16; i++) {
  const y = 285.7 + i * 16.95;
  s += `<circle cx="334.500" cy="${y}" r="2.600" fill="#d4dbe2" stroke="#7f9cc0"/><circle cx="813.500" cy="${y}" r="2.600" fill="#f0f5fa" stroke="#6f93b8"/>`;
}
s += `<polyline points="${series.map(p => X(p[0]) + "," + Y(p[1])).join(" ")}" fill="none" stroke="#4a7ebb" stroke-width="2.800"/>`;
series.forEach(p => {
  s += `<path d="M${X(p[0])} ${Y(p[1]) - 4.6}l4.600 4.600-4.600 4.600-4.600-4.600z" fill="#4a7fc4"/>`;
});
s += `<text class="bold" x="556" y="228" text-anchor="middle">qu (kn/m2)</text>
<text class="bold side" transform="translate(303 405) rotate(-90)" text-anchor="middle">Settlement (mm)</text>
<path d="M556 207.500h16M556 575h16M287 382v14M843 382v14" stroke="#a8aab0" stroke-dasharray="1 2"/>
<path d="M286 206l5 5M844 206l-5 5M286 576l5-5M844 576l-5-5" stroke="#b4b6bc"/>`;
document.getElementById("chart").innerHTML = s;
```
